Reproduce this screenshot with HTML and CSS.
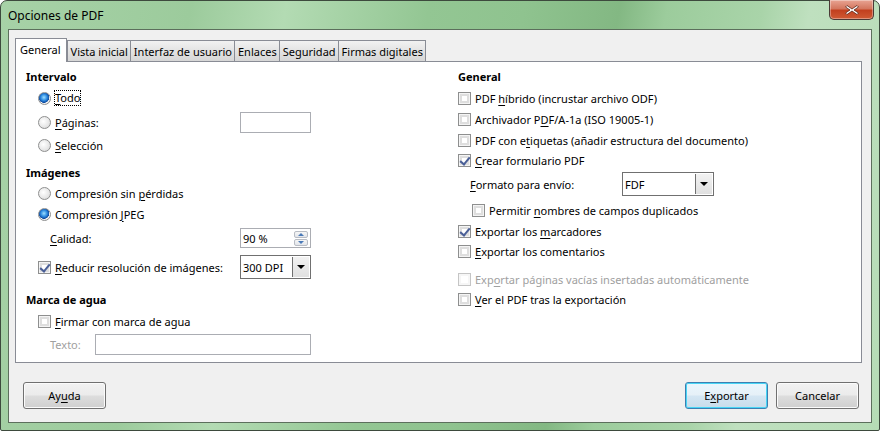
FILE: index.html
```html
<!DOCTYPE html>
<html lang="es">
<head>
<meta charset="utf-8">
<title>Opciones de PDF</title>
<link rel="stylesheet" href="styles.css">
</head>
<body>
<div class="window">
  <div class="titlebar">
    <span class="title">Opciones de PDF</span>
    <div class="close"><svg width="16" height="12" viewBox="0 0 16 12"><path d="M3 1.5 L8 5 L13 1.5 L14.5 3 L10 6 L14.5 9 L13 10.5 L8 7 L3 10.5 L1.5 9 L6 6 L1.5 3 Z" fill="#fff" stroke="#5a2418" stroke-width="0.8"/></svg></div>
  </div>
  <div class="client">
    <div class="tabs">
      <div class="tab active">General</div>
      <div class="tab">Vista inicial</div>
      <div class="tab">Interfaz de usuario</div>
      <div class="tab">Enlaces</div>
      <div class="tab">Seguridad</div>
      <div class="tab">Firmas digitales</div>
    </div>
    <div class="panel">
      <div class="col left">
        <div class="row head">Intervalo</div>
        <div class="row r24 ind"><span class="radio on"></span><span class="focus"><u>T</u>odo</span></div>
        <div class="row r24 ind between"><span class="lab"><span class="radio"></span><span><u>P</u>áginas:</span></span><span class="field w71"></span></div>
        <div class="row r22 ind"><span class="radio"></span><span><u>S</u>elección</span></div>
        <div class="row head mt6">Imágenes</div>
        <div class="row r22 ind"><span class="radio"></span><span>Compresión sin <u>p</u>érdidas</span></div>
        <div class="row r20 ind"><span class="radio on"></span><span>Compresión <u>J</u>PEG</span></div>
        <div class="row r22 ind2 between mt3"><span><u>C</u>alidad:</span><span class="field w71 spin">90 %<span class="spinbtn"><span class="up"></span><span class="down"></span></span></span></div>
        <div class="row r24 ind between mt6"><span class="lab"><span class="check on"></span><span><u>R</u>educir resolución de imágenes:</span></span><span class="field w71 combo">300 DPI<span class="dropbtn"></span></span></div>
        <div class="row head mt10">Marca de agua</div>
        <div class="row r22 ind mt1"><span class="check"></span><span><u>F</u>irmar con marca de agua</span></div>
        <div class="row r22 ind2 between mt1"><span class="disabled">Texto:</span><span class="field w216"></span></div>
      </div>
      <div class="col right">
        <div class="row head">General</div>
        <div class="row r22 mt1"><span class="check"></span><span>PDF <u>h</u>íbrido (incrustar archivo ODF)</span></div>
        <div class="row r20"><span class="check"></span><span>Archivador P<u>D</u>F/A-1a (ISO 19005-1)</span></div>
        <div class="row r20 mt1"><span class="check"></span><span>PDF con e<u>t</u>iquetas (añadir estructura del documento)</span></div>
        <div class="row r20"><span class="check on"></span><span><u>C</u>rear formulario PDF</span></div>
        <div class="row r24 ind12 mt2"><span class="fmt"><u>F</u>ormato para envío:</span><span class="field w92 combo">FDF<span class="dropbtn"></span></span></div>
        <div class="row r22 ind14 mt3"><span class="check"></span><span>Permitir <u>n</u>ombres de campos duplicados</span></div>
        <div class="row r20"><span class="check on"></span><span>Exportar los <u>m</u>arcadores</span></div>
        <div class="row r20"><span class="check"></span><span><u>E</u>xportar los comentarios</span></div>
        <div class="row r20 mt8"><span class="check dis"></span><span class="disabled">Exp<u>o</u>rtar páginas vacías insertadas automáticamente</span></div>
        <div class="row r20"><span class="check"></span><span><u>V</u>er el PDF tras la exportación</span></div>
      </div>
    </div>
    <div class="buttons">
      <button class="btn">Ay<u>u</u>da</button>
      <div class="right-btns">
        <button class="btn default">E<u>x</u>portar</button>
        <button class="btn">Cancelar</button>
      </div>
    </div>
  </div>
</div>
</body>
</html>
```
FILE: styles.css
```css
* { box-sizing: border-box; }
html, body { margin: 0; padding: 0; }
body {
  width: 880px; height: 431px; overflow: hidden;
  font-family: "Noto Sans", "Open Sans", sans-serif;
  font-size: 11px; color: #000;
  background: #fff;
}
u { text-decoration: underline; text-underline-offset: 2px; }
.window {
  width: 880px; height: 431px;
  border: 1px solid #3d4a3d;
  border-radius: 7px 7px 2px 2px;
  background: linear-gradient(100deg, #a7d2a7 0%, #9ccb9c 20%, #b3dbb3 30%, #93c693 45%, #8fc38f 55%, #83b883 65%, #9ccc9c 70%, #a9d4a9 80%, #bfe0bf 85%, #b6dcb6 100%);
  padding: 0 7px 7px 7px;
  display: flex; flex-direction: column;
}
.titlebar {
  height: 28px; flex: none;
  display: flex; align-items: center; justify-content: space-between;
  position: relative;
}
.title { font-size: 12px; padding-left: 0; margin-top: 1px; color: #000; }
.close {
  position: absolute; right: -2px; top: -1px;
  width: 45px; height: 20px;
  border: 1px solid #4a3a36; border-top: none;
  border-radius: 0 0 5px 5px;
  background: linear-gradient(#e8a493 0%, #d4775f 45%, #c2401f 55%, #cf5a34 100%);
  display: flex; align-items: center; justify-content: center;
  box-shadow: inset 0 0 0 1px rgba(255,255,255,0.35);
}
.client {
  flex: 1;
  background: #f0f0f0;
  border: 1px solid #5c6f5c;
  padding: 8px 9px 0 6px;
  display: flex; flex-direction: column;
}
.tabs { display: flex; height: 23px; align-items: flex-end; position: relative; z-index: 1; }
.tab {
  height: 21px; padding: 0 2px 0 3px;
  border: 1px solid #898c95; border-bottom: none; margin-right: -1px;
  background: linear-gradient(#f2f2f2, #e3e3e3 50%, #d6d6d6);
  display: flex; align-items: center; line-height: 1;
}
.tab.active {
  height: 24px; margin-bottom: -1px; background: #fff; padding: 0 5px 2px 4px; margin-right: 0;
}
.panel {
  height: 302px;
  border: 1px solid #898c95; background: #fff;
  display: flex; padding: 4px 0 0 10px;
}
.col { display: flex; flex-direction: column; }
.left { width: 285px; }
.right { margin-left: 147px; }
.row { display: flex; align-items: center; gap: 4px; white-space: nowrap; }
.head { height: 20px; font-weight: bold; }
.r20 { height: 20px; } .r22 { height: 22px; } .r24 { height: 24px; }
.mt1 { margin-top: 1px; } .mt2 { margin-top: 2px; } .mt3 { margin-top: 3px; } .mt6 { margin-top: 6px; } .mt8 { margin-top: 8px; } .mt10 { margin-top: 10px; }
.ind { padding-left: 12px; }
.ind2 { padding-left: 24px; }
.ind12 { padding-left: 12px; }
.ind14 { padding-left: 14px; }
.between { justify-content: space-between; }
.lab { display: flex; align-items: center; gap: 4px; }
.focus { outline: 1px dotted #000; outline-offset: 0; line-height: 14px; }
.disabled { color: #a0a0a0; }
.fmt { width: 148px; }

.radio {
  width: 13px; height: 13px; border-radius: 50%; flex: none;
  border: 1px solid #8e8f8f;
  background: radial-gradient(circle at 40% 40%, #ffffff 0%, #e6e6e6 60%, #cfcfcf 100%);
}
.radio.on {
  background: radial-gradient(circle at 45% 40%, #9fe0ff 0%, #2d8ae0 35%, #0f4a9e 58%, #f4f4f4 62%, #dcdcdc 100%);
}
.check {
  width: 13px; height: 13px; flex: none;
  border: 1px solid #8e8f8f;
  background: #fff;
  box-shadow: inset 0 0 0 1px #f4f4f4, inset 0 0 0 3px #dedede;
  position: relative;
}
.check.dis { border-color: #c5c5c5; box-shadow: inset 0 0 0 2px #f6f6f6; }
.check.on::after {
  content: ""; position: absolute; left: 3px; top: 0px;
  width: 4px; height: 8px;
  border: solid #4a5f97; border-width: 0 2px 2px 0;
  transform: rotate(40deg);
}
.field {
  height: 21px; border: 1px solid #abadb3; background: #fff; flex: none;
  display: flex; align-items: center; padding-left: 2px; position: relative;
}
.w71 { width: 71px; }
.w92 { width: 92px; }
.w216 { width: 216px; }
.spin { height: 20px; }
.spinbtn {
  position: absolute; right: 2px; top: 2px; width: 14px; height: 15px;
  display: flex; flex-direction: column; gap: 1px;
}
.spinbtn span {
  flex: 1; border: 1px solid #b8bcc4; border-radius: 2px;
  background: linear-gradient(#f6f6f6, #e2e5ea); position: relative;
}
.spinbtn .up::after, .spinbtn .down::after {
  content: ""; position: absolute; left: 3px; border-left: 3px solid transparent; border-right: 3px solid transparent;
}
.spinbtn .up::after { top: 1px; border-bottom: 3px solid #4a7ab8; }
.spinbtn .down::after { top: 1px; border-top: 3px solid #4a7ab8; }
.combo { height: 24px; border-color: #707070; }
.dropbtn {
  position: absolute; right: 1px; top: 1px; bottom: 1px; width: 17px;
  border-left: 1px solid #707070;
  background: linear-gradient(#f2f2f2, #e0e0e0);
}
.dropbtn::after {
  content: ""; position: absolute; left: 4px; top: 8px;
  border-left: 4px solid transparent; border-right: 4px solid transparent; border-top: 4px solid #000;
}
.buttons {
  display: flex; justify-content: space-between; align-items: flex-start;
  padding: 19px 3px 0 8px;
}
.right-btns { display: flex; gap: 8px; }
.btn {
  width: 83px; height: 27px; font: inherit; color: #000;
  border: 1px solid #707070; border-radius: 3px;
  background: linear-gradient(#f2f2f2 0%, #ebebeb 48%, #dddddd 52%, #cfcfcf 100%);
  box-shadow: inset 0 0 0 1px #fbfbfb;
  padding: 0;
}
.btn.default {
  border-color: #3c7fb1;
  box-shadow: inset 0 0 0 1px #48d5f5;
  background: linear-gradient(#eaf6fd 0%, #e6f0f7 48%, #d4e6f3 52%, #c8dcea 100%);
}
```
